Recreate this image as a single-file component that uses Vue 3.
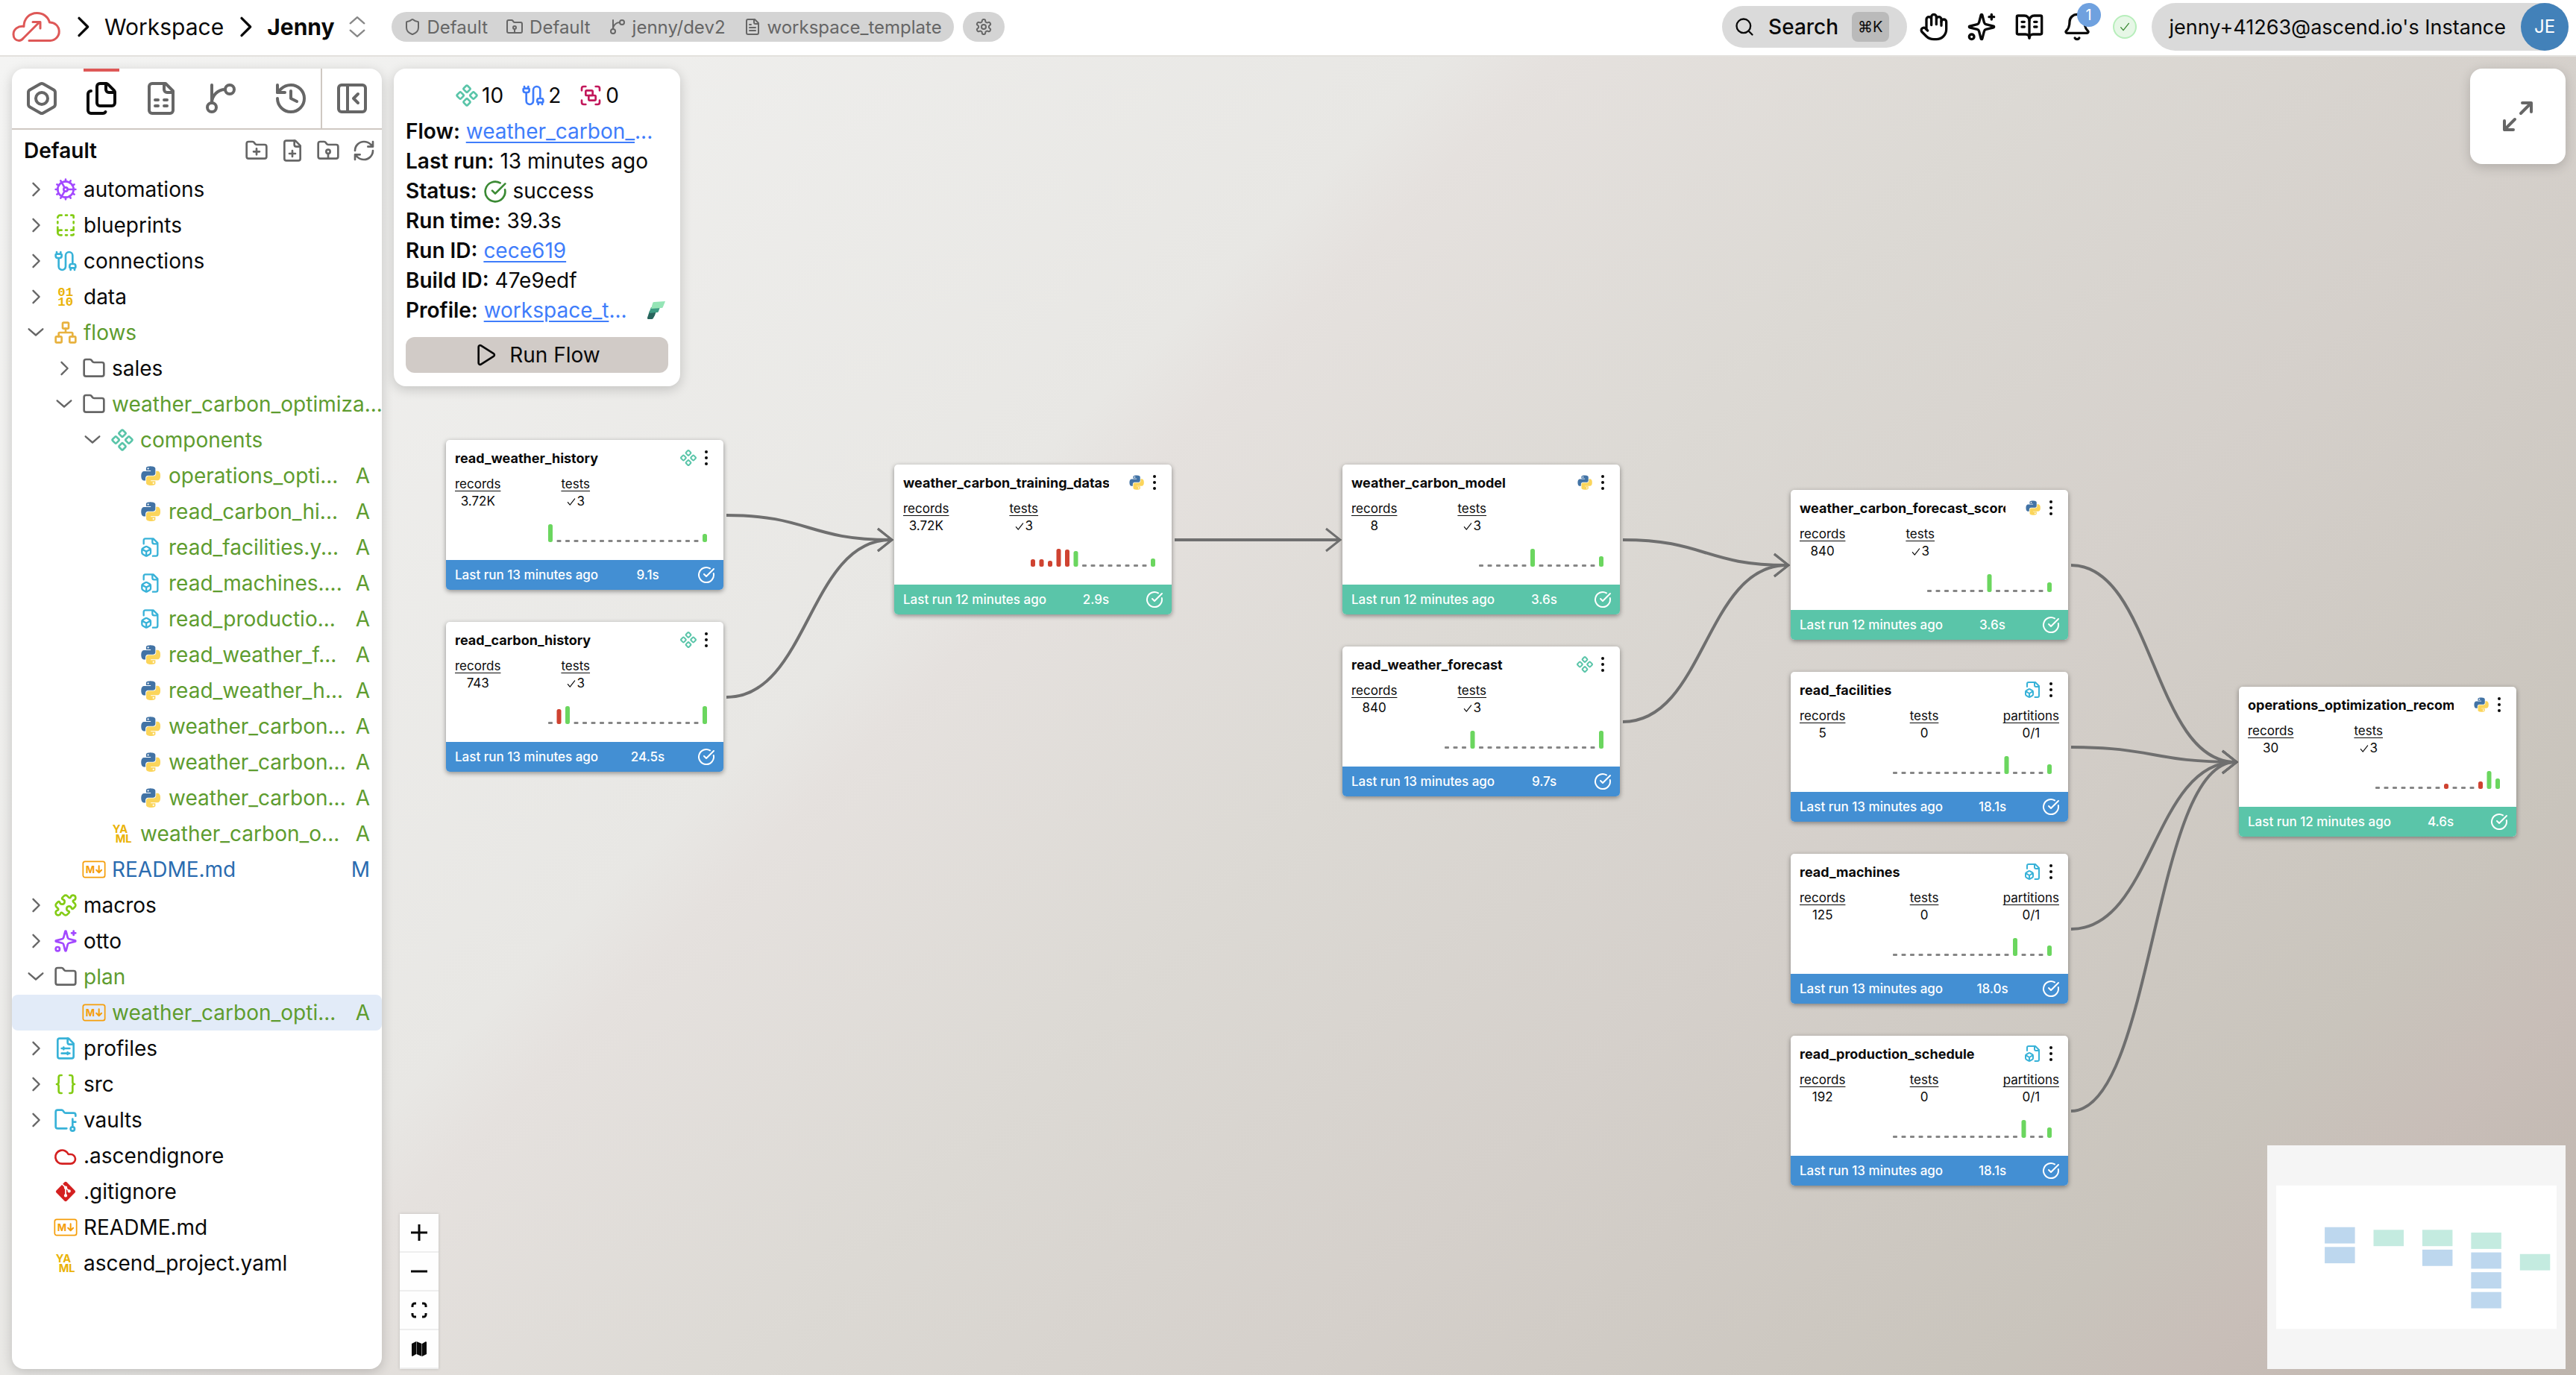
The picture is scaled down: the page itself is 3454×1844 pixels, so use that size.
<script setup>
import { ref, h } from 'vue'

const file = '<path d="M15 2H6a2 2 0 0 0-2 2v16a2 2 0 0 0 2 2h12a2 2 0 0 0 2-2V7Z"/><path d="M14 2v4a2 2 0 0 0 2 2h4"/>'
const folder = '<path d="M20 20a2 2 0 0 0 2-2V8a2 2 0 0 0-2-2h-7.9a2 2 0 0 1-1.69-.9L9.6 3.9A2 2 0 0 0 7.93 3H4a2 2 0 0 0-2 2v13a2 2 0 0 0 2 2Z"/>'

const icons = {
  folder,
  right: '<path d="m9 5 7 7-7 7"/>',
  down: '<path d="m4 8 8 7 8-7"/>',
  updown: '<path d="m4 8 8-7 8 7M4 16l8 7 8-7"/>',
  shield: '<path d="M20 13c0 5-3.5 7.5-7.66 8.95a1 1 0 0 1-.67-.01C7.5 20.5 4 18 4 13V6a1 1 0 0 1 1-1c2 0 4.5-1.2 6.24-2.72a1.17 1.17 0 0 1 1.52 0C14.51 3.81 17 5 19 5a1 1 0 0 1 1 1z"/>',
  project: folder + '<circle cx="12" cy="13" r="2"/><path d="M12 15v5"/>',
  branch: '<path d="M6 3v12M15 6a9 9 0 0 0-9 9"/><circle cx="18" cy="6" r="3"/><circle cx="6" cy="18" r="3"/>',
  fileText: file + '<path d="M10 9H8M16 13H8M16 17H8"/>',
  settings: '<path d="M12.22 2h-.44a2 2 0 0 0-2 2v.18a2 2 0 0 1-1 1.73l-.43.25a2 2 0 0 1-2 0l-.15-.08a2 2 0 0 0-2.73.73l-.22.38a2 2 0 0 0 .73 2.73l.15.1a2 2 0 0 1 1 1.72v.51a2 2 0 0 1-1 1.74l-.15.09a2 2 0 0 0-.73 2.73l.22.38a2 2 0 0 0 2.73.73l.15-.08a2 2 0 0 1 2 0l.43.25a2 2 0 0 1 1 1.73V20a2 2 0 0 0 2 2h.44a2 2 0 0 0 2-2v-.18a2 2 0 0 1 1-1.73l.43-.25a2 2 0 0 1 2 0l.15.08a2 2 0 0 0 2.73-.73l.22-.39a2 2 0 0 0-.73-2.73l-.15-.08a2 2 0 0 1-1-1.74v-.5a2 2 0 0 1 1-1.74l.15-.09a2 2 0 0 0 .73-2.73l-.22-.38a2 2 0 0 0-2.73-.73l-.15.08a2 2 0 0 1-2 0l-.43-.25a2 2 0 0 1-1-1.73V4a2 2 0 0 0-2-2z"/><circle cx="12" cy="12" r="3"/>',
  search: '<circle cx="11" cy="11" r="8"/><path d="m21 21-4.3-4.3"/>',
  hand: '<path d="M18 11V6a2 2 0 0 0-4 0M14 10V4a2 2 0 0 0-4 0v2M10 10.5V6a2 2 0 0 0-4 0v8"/><path d="M18 8a2 2 0 1 1 4 0v6a8 8 0 0 1-8 8h-2c-2.8 0-4.5-.86-5.99-2.34l-3.6-3.6a2 2 0 0 1 2.83-2.82L7 15"/>',
  sparkles: '<path d="M9.937 15.5A2 2 0 0 0 8.5 14.063l-6.135-1.582a.5.5 0 0 1 0-.962L8.5 9.936A2 2 0 0 0 9.937 8.5l1.582-6.135a.5.5 0 0 1 .963 0L14.063 8.5A2 2 0 0 0 15.5 9.937l6.135 1.581a.5.5 0 0 1 0 .964L15.5 14.063a2 2 0 0 0-1.437 1.437l-1.582 6.135a.5.5 0 0 1-.963 0z"/><path d="M20 2v4M22 4h-4"/><circle cx="4" cy="20" r="2"/>',
  book: '<path d="M12 7v14M16 12h2M16 8h2M6 12h2M6 8h2"/><path d="M3 18a1 1 0 0 1-1-1V4a1 1 0 0 1 1-1h5a4 4 0 0 1 4 4 4 4 0 0 1 4-4h5a1 1 0 0 1 1 1v13a1 1 0 0 1-1 1h-6a3 3 0 0 0-3 3 3 3 0 0 0-3-3z"/>',
  bell: '<path d="M10.268 21a2 2 0 0 0 3.464 0"/><path d="M3.262 15.326A1 1 0 0 0 4 17h16a1 1 0 0 0 .74-1.673C19.41 13.956 18 12.499 18 8A6 6 0 0 0 6 8c0 4.499-1.411 5.956-2.738 7.326"/>',
  check: '<path d="m4 13 5 6L20 5"/>',
  nut: '<path d="M21 16V8a2 2 0 0 0-1-1.73l-7-4a2 2 0 0 0-2 0l-7 4A2 2 0 0 0 3 8v8a2 2 0 0 0 1 1.73l7 4a2 2 0 0 0 2 0l7-4A2 2 0 0 0 21 16z"/><circle cx="12" cy="12" r="4"/>',
  files: '<path d="M15 2a2 2 0 0 1 1.414.586l4 4A2 2 0 0 1 21 8v7a2 2 0 0 1-2 2h-8a2 2 0 0 1-2-2V4a2 2 0 0 1 2-2z"/><path d="M15 2v4a2 2 0 0 0 2 2h4M5 7a2 2 0 0 0-2 2v11a2 2 0 0 0 2 2h8a2 2 0 0 0 1.732-1"/>',
  sheet: file + '<path d="M8 13h2M14 13h2M8 17h2M14 17h2"/>',
  history: '<path d="M3 12a9 9 0 1 0 9-9 9.75 9.75 0 0 0-6.74 2.74L3 8"/><path d="M3 3v5h5M12 7v5l4 2"/>',
  panel: '<rect x="3" y="3" width="18" height="18" rx="2"/><path d="M9 3v18M16 15l-3-3 3-3"/>',
  folderPlus: folder + '<path d="M12 10v6M9 13h6"/>',
  filePlus: file + '<path d="M9 15h6M12 18v-6"/>',
  refresh: '<path d="M3 12a9 9 0 0 1 9-9 9.75 9.75 0 0 1 6.74 2.74L21 8M21 3v5h-5M21 12a9 9 0 0 1-9 9 9.75 9.75 0 0 1-6.74-2.74L3 16M8 16H3v5"/>',
  cog: '<circle cx="12" cy="12" r="8"/><circle cx="12" cy="12" r="2"/><path d="M12 2v2M12 22v-2M17 20.66l-1-1.73M11 10.27 7 3.34M20.66 17l-1.73-1M3.34 7l1.73 1M14 12h8M2 12h2M20.66 7l-1.73 1M3.34 17l1.73-1M17 3.34l-1 1.73M11 13.73l-4 6.93"/>',
  blueprint: '<path d="M12 17h1.5M12 22h1.5M12 2h1.5M17.5 22H19a1 1 0 0 0 1-1M17.5 2H19a1 1 0 0 1 1 1v1.5M20 14v3h-2.5M20 8.5V10M4 10V8.5M4 19.5V14M4 4.5A2.5 2.5 0 0 1 6.5 2H8M8 22H6.5a1 1 0 0 1 0-5H8"/>',
  cable: '<path d="M17 21v-2a1 1 0 0 1-1-1v-1a2 2 0 0 1 2-2h2a2 2 0 0 1 2 2v1a1 1 0 0 1-1 1M19 15V6.5a1 1 0 0 0-7 0v11a1 1 0 0 1-7 0V9M21 21v-2h-4M3 5V3M4 9a2 2 0 0 1-2-2V6a1 1 0 0 1 1-1h4a1 1 0 0 1 1 1v1a2 2 0 0 1-2 2zM7 5V3"/>',
  binary: '<g stroke="none" fill="currentColor" font-family="Liberation Mono, monospace" font-weight="700" font-size="13"><text x="4" y="11">01</text><text x="4" y="21">10</text></g>',
  network: '<rect x="16" y="16" width="6" height="6" rx="1"/><rect x="2" y="16" width="6" height="6" rx="1"/><rect x="9" y="2" width="6" height="6" rx="1"/><path d="M5 16v-3a1 1 0 0 1 1-1h12a1 1 0 0 1 1 1v3M12 12V8"/>',
  component: '<path d="M15.536 11.293a1 1 0 0 0 0 1.414l2.376 2.377a1 1 0 0 0 1.414 0l2.377-2.377a1 1 0 0 0 0-1.414l-2.377-2.377a1 1 0 0 0-1.414 0zM2.297 11.293a1 1 0 0 0 0 1.414l2.377 2.377a1 1 0 0 0 1.414 0l2.377-2.377a1 1 0 0 0 0-1.414L6.088 8.916a1 1 0 0 0-1.414 0zM8.916 17.912a1 1 0 0 0 0 1.415l2.377 2.376a1 1 0 0 0 1.414 0l2.377-2.376a1 1 0 0 0 0-1.415l-2.377-2.376a1 1 0 0 0-1.414 0zM8.916 4.674a1 1 0 0 0 0 1.414l2.377 2.376a1 1 0 0 0 1.414 0l2.377-2.376a1 1 0 0 0 0-1.414l-2.377-2.377a1 1 0 0 0-1.414 0z"/>',
  group: '<path d="M3 7V5c0-1.1.9-2 2-2h2M17 3h2c1.1 0 2 .9 2 2v2M21 17v2c0 1.1-.9 2-2 2h-2M7 21H5c-1.1 0-2-.9-2-2v-2"/><rect x="7" y="7" width="7" height="5" rx="1"/><rect x="10" y="12" width="7" height="5" rx="1"/>',
  fileBox: '<path d="M14.5 22H18a2 2 0 0 0 2-2V7l-5-5H6a2 2 0 0 0-2 2v4M14 2v4a2 2 0 0 0 2 2h4M3 13.1a2 2 0 0 0-1 1.76v3.24a2 2 0 0 0 .97 1.78L6 21.7a2 2 0 0 0 2.03.01L11 19.9a2 2 0 0 0 1-1.76V14.9a2 2 0 0 0-.97-1.78L8 11.3a2 2 0 0 0-2.03-.01ZM7 17v5M11.7 14.2 7 17l-4.7-2.8"/>',
  python: '<g transform="translate(2.5 2.5) scale(.8)" stroke="none"><path fill="#4273a5" d="M14.25.18l.9.2.73.26.59.3.45.32.34.34.25.34.16.33.1.3.04.26.02.2-.01.13V8.5l-.05.63-.13.55-.21.46-.26.38-.3.31-.33.25-.35.19-.35.14-.33.1-.3.07-.26.04-.21.02H8.77l-.69.05-.59.14-.5.22-.41.27-.33.32-.27.35-.2.36-.15.37-.1.35-.07.32-.04.27-.02.21v3.06H3.17l-.21-.03-.28-.07-.32-.12-.35-.18-.36-.26-.36-.36-.35-.46-.32-.59-.28-.73-.21-.88-.14-1.05-.05-1.23.06-1.22.16-1.04.24-.87.32-.71.36-.57.4-.44.42-.33.42-.24.4-.16.36-.1.32-.05.24-.01h.16l.06.01h8.16v-.83H6.18l-.01-2.75-.02-.37.05-.34.11-.31.17-.28.25-.26.31-.23.38-.2.44-.18.51-.15.58-.12.64-.1.71-.06.77-.04.84-.02 1.27.05zm-6.3 1.98l-.23.33-.08.41.08.41.23.34.33.22.41.09.41-.09.33-.22.23-.34.08-.41-.08-.41-.23-.33-.33-.22-.41-.09-.41.09z"/><path fill="#fbd55b" d="m21.1 6.11l.28.06.32.12.35.18.36.27.36.35.35.47.32.59.28.73.21.88.14 1.04.05 1.23-.06 1.23-.16 1.04-.24.86-.32.71-.36.57-.4.45-.42.33-.42.24-.4.16-.36.09-.32.05-.24.02-.16-.01h-8.22v.82h5.84l.01 2.76.02.36-.05.34-.11.31-.17.29-.25.25-.31.24-.38.2-.44.17-.51.15-.58.13-.64.09-.71.07-.77.04-.84.01-1.27-.04-1.07-.14-.9-.2-.73-.25-.59-.3-.45-.33-.34-.34-.25-.34-.16-.33-.1-.3-.04-.25-.02-.2.01-.13v-5.34l.05-.64.13-.54.21-.46.26-.38.3-.32.33-.24.35-.2.35-.14.33-.1.3-.06.26-.04.21-.02.13-.01h5.84l.69-.05.59-.14.5-.21.41-.28.33-.32.27-.35.2-.36.15-.36.1-.35.07-.32.04-.28.02-.21V6.07h2.09l.14.01zm-6.47 14.25l-.23.33-.08.41.08.41.23.33.33.23.41.08.41-.08.33-.23.23-.33.08-.41-.08-.41-.23-.33-.33-.23-.41-.08-.41.08z"/></g>',
  yaml: '<g stroke="none" fill="currentColor" font-family="Inter, sans-serif" font-weight="700" font-size="11"><text x="2" y="11">YA</text><text x="5" y="21">ML</text></g>',
  markdown: '<rect x="1" y="4" width="22" height="16" rx="2" stroke-width="1.3"/><text x="3.6" y="15.4" stroke="none" fill="currentColor" font-family="Inter, sans-serif" font-weight="700" font-size="10">M</text><path d="M17 8.5v6.5M14.4 12.6 17 15.2l2.6-2.6" stroke-width="1.5"/>',
  puzzle: '<path d="M15.39 4.39a1 1 0 0 0 1.68-.474 2.5 2.5 0 1 1 3.014 3.015 1 1 0 0 0-.474 1.68l1.683 1.682a2.414 2.414 0 0 1 0 3.414L19.61 15.39a1 1 0 0 1-1.68-.474 2.5 2.5 0 1 0-3.014 3.015 1 1 0 0 1 .474 1.68l-1.683 1.682a2.414 2.414 0 0 1-3.414 0L8.61 19.61a1 1 0 0 0-1.68.474 2.5 2.5 0 1 1-3.014-3.015 1 1 0 0 0 .474-1.68l-1.683-1.682a2.414 2.414 0 0 1 0-3.414L4.39 8.61a1 1 0 0 1 1.68.474 2.5 2.5 0 1 0 3.014-3.015 1 1 0 0 1-.474-1.68l1.683-1.682a2.414 2.414 0 0 1 3.414 0z"/>',
  fileSliders: file + '<path d="M8 12h8M10 11v2M8 17h8M14 16v2"/>',
  braces: '<path d="M8 3H7a2 2 0 0 0-2 2v5a2 2 0 0 1-2 2 2 2 0 0 1 2 2v5c0 1.1.9 2 2 2h1M16 21h1a2 2 0 0 0 2-2v-5c0-1.1.9-2 2-2a2 2 0 0 1-2-2V5a2 2 0 0 0-2-2h-1"/>',
  vault: '<path d="M13 20.5H4a2 2 0 0 1-2-2V4a2 2 0 0 1 2-2h3.9a2 2 0 0 1 1.69.9l.81 1.2a2 2 0 0 0 1.67.9H20a2 2 0 0 1 2 2v1M19 18v-7M19 14h3"/><circle cx="19" cy="21" r="2"/>',
  cloud: '<path d="M8.5 20a6.8 6.8 0 1 1 6.3-9.5H17a4.75 4.75 0 0 1 0 9.5z"/>',
  git: '<path stroke="none" fill="currentColor" d="M10.8 2.7a1.7 1.7 0 0 1 2.4 0l8.1 8.1a1.7 1.7 0 0 1 0 2.4l-8.1 8.1a1.7 1.7 0 0 1-2.4 0l-8.1-8.1a1.7 1.7 0 0 1 0-2.4z"/><g stroke="#fff" stroke-width="1.3"><path d="M8.5 4.5l3.5 3.5v8M12 8l3.5 3.5"/><g fill="#fff"><circle cx="12" cy="8" r="1"/><circle cx="12" cy="16" r="1"/><circle cx="15.5" cy="11.5" r="1"/></g></g>',
  done: '<path d="M21.801 10A10 10 0 1 1 17 3.335M9 11l3 3L22 4"/>',
  play: '<path d="M5 4a1.6 1.6 0 0 1 2.4-1.4l12.7 8a1.6 1.6 0 0 1 0 2.8l-12.7 8A1.6 1.6 0 0 1 5 20z"/>',
  expand: '<path d="M15 3h6v6M9 21H3v-6M21 3l-7 7M3 21l7-7"/>',
  plus: '<path d="M12 1v22M1 12h22"/>',
  minus: '<path d="M1 12h22"/>',
  fit: '<path d="M3 8V6a3 3 0 0 1 3-3h2M16 3h2a3 3 0 0 1 3 3v2M21 16v2a3 3 0 0 1-3 3h-2M8 21H6a3 3 0 0 1-3-3v-2"/>',
  map: '<g fill="currentColor" stroke="none"><path d="M2 5l6-3v17l-4.600 2.700A1 1 0 0 1 2 21z"/><path d="M8.500 2l7 3v17l-7-3z"/><path d="M16 5l4.600-2.700A1 1 0 0 1 22 3v16l-6 3z"/></g>',
  dots: '<g fill="currentColor" stroke="none"><circle cx="12" cy="4" r="2"/><circle cx="12" cy="12" r="2"/><circle cx="12" cy="20" r="2"/></g>',
}

const Icon = (props) => h('svg', {
  class: 'icon',
  viewBox: '0 0 24 24',
  'aria-hidden': 'true',
  innerHTML: icons[props.name],
})
Icon.props = ['name']

const activeTab = ref('files')
const tabs = [
  { id: 'nut', label: 'Build' },
  { id: 'files', label: 'Files' },
  { id: 'sheet', label: 'Summary' },
  { id: 'branch', label: 'Source control' },
]

const chips = [
  { icon: 'shield', text: 'Default' },
  { icon: 'project', text: 'Default' },
  { icon: 'branch', text: 'jenny/dev2' },
  { icon: 'fileText', text: 'workspace_template' },
]

const selected = ref(23)
const tree = [
  { name: 'automations', icon: 'cog', tint: 'purple', open: false },
  { name: 'blueprints', icon: 'blueprint', tint: 'lime', open: false },
  { name: 'connections', icon: 'cable', tint: 'sky', open: false },
  { name: 'data', icon: 'binary', tint: 'gold', open: false },
  { name: 'flows', icon: 'network', tint: 'amber', open: true, state: 'added' },
  { name: 'sales', icon: 'folder', level: 1, open: false },
  { name: 'weather_carbon_optimiza...', icon: 'folder', level: 1, open: true, state: 'added' },
  { name: 'components', icon: 'component', tint: 'teal', level: 2, open: true, state: 'added' },
  { name: 'operations_opti...', icon: 'python', level: 3, state: 'added', mark: 'A' },
  { name: 'read_carbon_hi...', icon: 'python', level: 3, state: 'added', mark: 'A' },
  { name: 'read_facilities.y...', icon: 'fileBox', tint: 'sky', level: 3, state: 'added', mark: 'A' },
  { name: 'read_machines....', icon: 'fileBox', tint: 'sky', level: 3, state: 'added', mark: 'A' },
  { name: 'read_productio...', icon: 'fileBox', tint: 'sky', level: 3, state: 'added', mark: 'A' },
  { name: 'read_weather_f...', icon: 'python', level: 3, state: 'added', mark: 'A' },
  { name: 'read_weather_h...', icon: 'python', level: 3, state: 'added', mark: 'A' },
  { name: 'weather_carbon...', icon: 'python', level: 3, state: 'added', mark: 'A' },
  { name: 'weather_carbon...', icon: 'python', level: 3, state: 'added', mark: 'A' },
  { name: 'weather_carbon...', icon: 'python', level: 3, state: 'added', mark: 'A' },
  { name: 'weather_carbon_o...', icon: 'yaml', tint: 'gold', level: 2, state: 'added', mark: 'A' },
  { name: 'README.md', icon: 'markdown', tint: 'orange', level: 1, state: 'modified', mark: 'M' },
  { name: 'macros', icon: 'puzzle', tint: 'lime', open: false },
  { name: 'otto', icon: 'sparkles', tint: 'purple', open: false },
  { name: 'plan', icon: 'folder', open: true, state: 'added' },
  { name: 'weather_carbon_opti...', icon: 'markdown', tint: 'orange', level: 1, state: 'added', mark: 'A' },
  { name: 'profiles', icon: 'fileSliders', tint: 'sky', open: false },
  { name: 'src', icon: 'braces', tint: 'lime', open: false },
  { name: 'vaults', icon: 'vault', tint: 'sky', open: false },
  { name: '.ascendignore', icon: 'cloud', tint: 'red' },
  { name: '.gitignore', icon: 'git', tint: 'red' },
  { name: 'README.md', icon: 'markdown', tint: 'orange' },
  { name: 'ascend_project.yaml', icon: 'yaml', tint: 'gold' },
]

// bars: total slots, then [slot, height, failed]
const nodes = [
  { name: 'read_weather_history', x: 598, y: 514, icon: 'component', records: '3.72K', tests: 3, ago: 13, time: '9.1s', slots: 19, bars: [[0, 24], [18, 11]] },
  { name: 'read_carbon_history', x: 598, y: 758, icon: 'component', records: '743', tests: 3, ago: 13, time: '24.5s', slots: 19, bars: [[1, 20, true], [2, 24], [18, 24]] },
  { name: 'weather_carbon_training_datas', x: 1199, y: 547, icon: 'python', records: '3.72K', tests: 3, ago: 12, time: '2.9s', slots: 15, bars: [[0, 10, true], [1, 10, true], [2, 8, true], [3, 24, true], [4, 23, true], [5, 21], [14, 11]] },
  { name: 'weather_carbon_model', x: 1800, y: 547, icon: 'python', records: '8', tests: 3, ago: 12, time: '3.6s', slots: 15, bars: [[6, 24], [14, 14]] },
  { name: 'read_weather_forecast', x: 1800, y: 791, icon: 'component', records: '840', tests: 3, ago: 13, time: '9.7s', slots: 19, bars: [[3, 24], [18, 24]] },
  { name: 'weather_carbon_forecast_score', x: 2401, y: 581, icon: 'python', records: '840', tests: 3, ago: 12, time: '3.6s', slots: 15, bars: [[7, 24], [14, 13]] },
  { name: 'read_facilities', x: 2401, y: 825, icon: 'fileBox', records: '5', tests: 0, partitions: '0/1', ago: 13, time: '18.1s', slots: 19, bars: [[13, 24], [18, 13]] },
  { name: 'read_machines', x: 2401, y: 1069, icon: 'fileBox', records: '125', tests: 0, partitions: '0/1', ago: 13, time: '18.0s', slots: 19, bars: [[14, 24], [18, 14]] },
  { name: 'read_production_schedule', x: 2401, y: 1313, icon: 'fileBox', records: '192', tests: 0, partitions: '0/1', ago: 13, time: '18.1s', slots: 19, bars: [[15, 24], [18, 14]] },
  { name: 'operations_optimization_recom', x: 3002, y: 845, icon: 'python', records: '30', tests: 3, ago: 12, time: '4.6s', slots: 15, bars: [[8, 7, true], [12, 10, true], [13, 24], [14, 14]] },
]

const links = [[0, 2], [1, 2], [2, 3], [3, 5], [4, 5], [5, 9], [6, 9], [7, 9], [8, 9]]

const edgePath = ([from, to]) => {
  const x1 = nodes[from].x + 376
  const y1 = nodes[from].y + 101
  const x2 = nodes[to].x - 5
  const y2 = nodes[to].y + 101
  const mid = (x1 + x2) / 2
  return `M${x1} ${y1}C${mid} ${y1} ${mid} ${y2} ${x2} ${y2}`
}

// every run is a slot in the chart; a slot without a run gets a short dash
const history = (node) => Array.from({ length: node.slots }, (_, i) => {
  const bar = node.bars.find((b) => b[0] === i)
  return bar
    ? { x: i * 23, height: bar[1] * 2, kind: bar[2] ? 'failed' : 'passed' }
    : { x: i * 23, height: 6, kind: 'none' }
})

const isTransform = (node) => node.ago === 12
</script>

<template>
  <div class="page">
    <header class="topbar">
      <nav class="crumbs" aria-label="Breadcrumb">
        <a href="#" class="logo" aria-label="Ascend">
          <svg viewBox="0 0 66 40">
            <path d="M23 38.5h28.500a12.2 12.2 0 0 0-1-24.5C48.5 6.5 42 1.5 33.5 1.5 23.5 1.5 16 9 16 19.5 8 18.5 2 23.5 2 30c0 5 3 8.5 7.5 8.5 3 0 4.5-1.5 6-3.500L37 13.5M28 13.5h10V22" />
          </svg>
        </a>
        <Icon name="right" class="crumb-sep" />
        <a href="#" class="crumb">Workspace</a>
        <Icon name="right" class="crumb-sep" />
        <button class="crumb current">Jenny<Icon name="updown" class="updown" /></button>
      </nav>
      <div class="chips">
        <span v-for="(chip, i) in chips" :key="i" class="chip"><Icon :name="chip.icon" />{{ chip.text }}</span>
      </div>
      <button class="gear" aria-label="Workspace settings"><Icon name="settings" /></button>

      <div class="tools">
        <button class="search"><Icon name="search" /><span>Search</span><kbd>⌘K</kbd></button>
        <div class="actions">
          <button aria-label="Raise hand"><Icon name="hand" /></button>
          <button aria-label="Otto"><Icon name="sparkles" /></button>
          <button aria-label="Docs"><Icon name="book" /></button>
          <button class="bell" aria-label="Notifications"><Icon name="bell" /><span class="count">1</span></button>
        </div>
        <span class="healthy"><Icon name="check" /></span>
        <button class="instance"><span>jenny+41263@ascend.io's Instance</span><span class="avatar">JE</span></button>
      </div>
    </header>

    <main class="canvas">
      <div class="flow">
        <svg class="edges">
          <defs>
            <marker id="arrow" viewBox="0 0 24 36" markerWidth="24" markerHeight="36" refX="20" refY="18" orient="auto" markerUnits="userSpaceOnUse">
              <path d="M3 3l19 15L3 33" />
            </marker>
          </defs>
          <path v-for="(link, i) in links" :key="i" :d="edgePath(link)" marker-end="url(#arrow)" />
        </svg>

        <article v-for="node in nodes" :key="node.name" class="node" :style="{ left: node.x + 'px', top: node.y + 'px' }">
          <div class="node-head">
            <h3>{{ node.name }}</h3>
            <Icon :name="node.icon" :class="node.icon" />
            <button aria-label="Node menu"><Icon name="dots" /></button>
          </div>
          <dl class="stats">
            <div><dt>records</dt><dd>{{ node.records }}</dd></div>
            <div><dt>tests</dt><dd><Icon v-if="node.tests" name="check" />{{ node.tests }}</dd></div>
            <div v-if="node.partitions"><dt>partitions</dt><dd>{{ node.partitions }}</dd></div>
            <div v-else class="no-stat"></div>
          </dl>
          <svg class="runs" :viewBox="`0 0 ${node.slots * 23 - 11} 48`">
            <rect v-for="(bar, i) in history(node)" :key="i" :class="bar.kind" :x="bar.x" :y="48 - bar.height" width="12" :height="bar.height" :rx="bar.kind === 'none' ? 2 : 5" />
          </svg>
          <footer :class="{ transform: isTransform(node) }">
            <span>Last run {{ node.ago }} minutes ago</span>
            <span>{{ node.time }}</span>
            <Icon name="done" />
          </footer>
        </article>
      </div>

      <aside class="sidebar">
        <div class="tabs">
          <div class="tab-list">
            <button v-for="tab in tabs" :key="tab.id" :aria-label="tab.label" :class="{ active: activeTab === tab.id }" @click="activeTab = tab.id">
              <Icon :name="tab.id" />
            </button>
          </div>
          <button aria-label="History" class="history" :class="{ active: activeTab === 'history' }" @click="activeTab = 'history'"><Icon name="history" /></button>
          <button aria-label="Collapse sidebar" class="collapse"><Icon name="panel" /></button>
        </div>
        <div class="files-head">
          <h2>Default</h2>
          <button aria-label="New folder"><Icon name="folderPlus" /></button>
          <button aria-label="New file"><Icon name="filePlus" /></button>
          <button aria-label="Project folder"><Icon name="project" /></button>
          <button aria-label="Refresh"><Icon name="refresh" /></button>
        </div>
        <ul class="tree">
          <li v-for="(row, i) in tree" :key="i">
            <button :class="['row', 'level-' + (row.level || 0), row.state, { selected: selected === i }]" @click="selected = i">
              <span class="toggle"><Icon v-if="row.open !== undefined" :name="row.open ? 'down' : 'right'" /></span>
              <Icon :name="row.icon" :class="['kind', row.tint, row.icon]" />
              <span class="name">{{ row.name }}</span>
              <span v-if="row.mark" class="mark">{{ row.mark }}</span>
            </button>
          </li>
        </ul>
      </aside>

      <div class="overlay">
        <div class="overlay-row">
          <section class="summary">
            <div class="counts">
              <span><Icon name="component" class="teal" />10</span>
              <span><Icon name="cable" class="blue" />2</span>
              <span><Icon name="group" class="pink" />0</span>
            </div>
            <p><b>Flow:</b> <a href="#">weather_carbon_</a><i>...</i></p>
            <p><b>Last run:</b> 13 minutes ago</p>
            <p><b>Status:</b> <Icon name="done" class="ok" /> success</p>
            <p><b>Run time:</b> 39.3s</p>
            <p><b>Run ID:</b> <a href="#">cece619</a></p>
            <p><b>Build ID:</b> 47e9edf</p>
            <p class="profile">
              <span><b>Profile:</b> <a href="#">workspace_t</a><i>...</i></span>
              <svg class="fabric" viewBox="0 0 24 24">
                <path fill="#27645c" d="M3 13h9l-2 6-2 3.500a2 2 0 0 1-2 1.500H1.500A1.500 1.500 0 0 1 0 22z" />
                <path fill="#3d9c83" d="M5 8h12l-2 5.500a2 2 0 0 1-2 1.500L2 16z" />
                <path fill="#95e5b6" d="M7 3a2 2 0 0 1 2-2l15-1-3 7.500A2 2 0 0 1 19 9L5 10z" />
              </svg>
            </p>
            <button class="run"><Icon name="play" />Run Flow</button>
          </section>
          <button class="expand" aria-label="Expand"><Icon name="expand" /></button>
        </div>

        <div class="overlay-row bottom">
          <div class="zoom">
            <button aria-label="Zoom in"><Icon name="plus" /></button>
            <button aria-label="Zoom out"><Icon name="minus" /></button>
            <button aria-label="Fit view"><Icon name="fit" /></button>
            <button aria-label="Toggle map"><Icon name="map" /></button>
          </div>
          <svg class="minimap" viewBox="-110 -494 3674 2756">
            <rect class="view" width="3454" height="1768" />
            <rect v-for="node in nodes" :key="node.name" :class="{ transform: isTransform(node) }" :x="node.x" :y="node.y" width="372" height="201" />
          </svg>
        </div>
      </div>
    </main>
  </div>
</template>

<style>
body {
  margin: 0;
}
</style>

<style scoped>
.page {
  --teal: #5ac5a9;
  --blue: #438fd3;
  --green: #5e9c2f;
  display: flex;
  flex-direction: column;
  min-height: 100vh;
  font-family: Inter, 'Liberation Sans', sans-serif;
  font-size: 28px;
  color: #0a0a0a;
}

* {
  box-sizing: border-box;
}

button {
  font: inherit;
  color: inherit;
  border: none;
  background: none;
  padding: 0;
  cursor: pointer;
}

a {
  color: inherit;
  text-decoration: none;
}

h2, h3, p, dl, dd, ul {
  margin: 0;
  padding: 0;
  font-size: inherit;
}

.icon {
  display: block;
  flex: none;
  width: 32px;
  height: 32px;
  overflow: visible;
  fill: none;
  stroke: currentColor;
  stroke-width: 2;
  stroke-linecap: round;
  stroke-linejoin: round;
}

/* top bar */
.topbar {
  display: flex;
  align-items: center;
  height: 76px;
  padding: 0 10px 2px 16px;
  border-bottom: 2px solid #e3e1dd;
  background: #fff;
}

.crumbs {
  display: flex;
  align-items: center;
  font-size: 30px;
}

.logo svg {
  display: block;
  width: 66px;
  height: 40px;
  fill: none;
  stroke: #de5857;
  stroke-width: 3;
  stroke-linecap: round;
  stroke-linejoin: round;
}

.crumb-sep {
  width: 40px;
  height: 40px;
  margin: 0 9px;
}

.current {
  display: flex;
  align-items: center;
  gap: 16px;
  font-weight: 700;
}

.updown {
  width: 28px;
  height: 28px;
  color: #888;
}

.chips {
  display: flex;
  align-items: center;
  gap: 24px;
  height: 40px;
  margin: 0 12px 0 32px;
  padding: 0 16px;
  border-radius: 20px;
  background: #d4d4d4;
  color: #666;
  font-size: 24px;
}

.chip {
  display: flex;
  align-items: center;
  gap: 8px;
}

.chip .icon,
.gear .icon {
  width: 24px;
  height: 24px;
}

.gear {
  display: grid;
  place-items: center;
  width: 56px;
  height: 40px;
  border-radius: 20px;
  background: #d4d4d4;
  color: #666;
}

.tools {
  display: flex;
  align-items: center;
  margin-left: auto;
}

.search {
  display: flex;
  align-items: center;
  height: 56px;
  margin-right: 16px;
  padding: 0 24px 0 16px;
  border-radius: 28px;
  background: #dadada;
  font-weight: 500;
}

.search .icon {
  width: 28px;
  height: 28px;
}

.search span {
  margin: 0 18px;
}

kbd {
  height: 40px;
  padding: 0 8px;
  border-radius: 8px;
  background: #bababa;
  font: 400 20px/40px Inter, 'DejaVu Sans', sans-serif;
}

.actions {
  display: flex;
  gap: 24px;
  margin-right: 28px;
}

.actions .icon {
  width: 40px;
  height: 40px;
}

.bell {
  position: relative;
}

.count {
  position: absolute;
  top: -12px;
  right: -12px;
  width: 32px;
  height: 32px;
  border-radius: 50%;
  background: #6fa1df;
  color: #fff;
  font-size: 20px;
  line-height: 32px;
}

.healthy {
  display: grid;
  place-items: center;
  width: 32px;
  height: 32px;
  margin-right: 20px;
  border: 2px solid #b7eebb;
  border-radius: 50%;
  background: #e6f7e6;
  color: #3b8a34;
}

.healthy .icon {
  width: 16px;
  height: 16px;
}

.instance {
  display: flex;
  align-items: center;
  gap: 20px;
  height: 64px;
  padding-left: 24px;
  border-radius: 32px;
  background: #dadada;
  font-size: 27px;
}

.avatar {
  width: 64px;
  height: 64px;
  border-radius: 50%;
  background: #4281b9;
  color: #fff;
  font-size: 24px;
  line-height: 64px;
}

/* canvas */
.canvas {
  position: relative;
  flex: 1;
  display: flex;
  gap: 16px;
  padding: 16px 14px 8px 16px;
  overflow: hidden;
  background: linear-gradient(135deg, #f4f4f3 0%, #e8e7e4 37%, #e5e1de 40%, #dcd9d4 53%, #d5d0cb 67%, #c9c4bc 85%, #c8beb8 90%, #bdb4ac 100%);
}

.flow {
  position: absolute;
  inset: 0;
}

.edges {
  position: absolute;
  width: 100%;
  height: 100%;
  fill: none;
  stroke: #6f6f6f;
  stroke-width: 4;
}

.edges marker path {
  stroke-width: 3;
}

.node {
  position: absolute;
  display: flex;
  flex-direction: column;
  width: 372px;
  border-radius: 5px;
  background: #fff;
  box-shadow: 0 2px 6px rgba(0, 0, 0, 0.4);
  font-size: 17px;
  line-height: 23px;
}

.node-head {
  display: flex;
  align-items: center;
  height: 48px;
  padding: 0 11px 0 12px;
}

.node-head h3 {
  width: 276px;
  margin-right: auto;
  overflow: hidden;
  white-space: nowrap;
  font-size: 18px;
  font-weight: 700;
}

.node-head .icon {
  width: 24px;
  height: 24px;
}

.stats {
  display: flex;
  justify-content: space-between;
  padding: 0 12px;
  text-align: center;
}

.stats dt {
  text-decoration: underline;
  text-underline-offset: 3px;
}

.stats dd {
  display: flex;
  align-items: center;
  justify-content: center;
}

.stats .icon {
  width: 14px;
  height: 14px;
}

.no-stat {
  width: 86px;
}

.runs {
  align-self: flex-end;
  height: 24px;
  margin: 19px 22px 24px 0;
}

.runs .passed { fill: #6bd65f; }
.runs .failed { fill: #cf4331; }
.runs .none { fill: #868686; }

.node footer {
  display: flex;
  align-items: center;
  justify-content: space-between;
  height: 40px;
  padding: 0 11px 0 12px;
  border-radius: 0 0 5px 5px;
  background: var(--blue);
  color: #fff;
  font-weight: 500;
}

.node footer.transform {
  background: var(--teal);
}

.node footer .icon {
  width: 24px;
  height: 24px;
}

/* sidebar */
.sidebar {
  position: relative;
  flex: none;
  width: 496px;
  border-radius: 16px;
  background: #fff;
  box-shadow: 0 4px 16px rgba(0, 0, 0, 0.18);
}

.tabs {
  display: flex;
  height: 82px;
  border-bottom: 2px solid #cfc8c2;
  color: #666;
}

.tabs .icon {
  width: 48px;
  height: 48px;
}

.tab-list {
  display: flex;
  gap: 32px;
  flex: 1;
  padding-left: 16px;
}

.tab-list .active {
  color: #0a0a0a;
  box-shadow: inset 0 4px 0 #de5857;
}

.history {
  padding: 0 16px;
}

.collapse {
  padding: 0 16px;
  border-left: 2px solid #cfc8c2;
}

.files-head {
  display: flex;
  align-items: center;
  gap: 16px;
  height: 56px;
  padding: 0 8px 0 16px;
}

.files-head h2 {
  margin-right: auto;
  font-weight: 600;
}

.files-head button {
  color: #666;
}

.tree {
  list-style: none;
}

.row {
  display: flex;
  align-items: center;
  width: 100%;
  height: 48px;
  padding: 0 16px;
  border-radius: 8px;
  text-align: left;
  white-space: nowrap;
}

.level-1 { padding-left: 54px; }
.level-2 { padding-left: 92px; }
.level-3 { padding-left: 130px; }

.added { color: var(--green); }
.modified { color: #2b6cb0; }
.selected { background: #e2ebf8; }

.toggle {
  flex: none;
  width: 32px;
  margin-right: 8px;
  color: #666;
}

.toggle .icon {
  width: 28px;
  height: 28px;
  margin-left: 2px;
}

.kind {
  margin-right: 8px;
}

.kind.folder {
  color: #666;
}

.kind.fileBox {
  width: 28px;
  height: 28px;
  margin: 0 10px 0 2px;
}

.name {
  flex: none;
}

.mark {
  margin-left: auto;
}

.purple { color: #a349ff; }
.lime { color: #84cc16; }
.sky, .fileBox { color: #38b2d8; }
.gold { color: #eab308; }
.amber { color: #e8b23f; }
.orange { color: #f59e0b; }
.teal, .component { color: var(--teal); }
.blue { color: #3f7dfb; }
.pink { color: #c2185b; }
.red { color: #d42020; }

/* panels over the canvas */
.overlay {
  position: relative;
  flex: 1;
  display: flex;
  flex-direction: column;
  justify-content: space-between;
}

.overlay-row {
  display: flex;
  align-items: flex-start;
  justify-content: space-between;
}

.bottom {
  align-items: flex-end;
  padding-left: 8px;
}

.summary {
  width: 384px;
  padding: 16px 16px 18px;
  border-radius: 16px;
  background: #fff;
  box-shadow: 0 4px 16px rgba(0, 0, 0, 0.18);
  line-height: 40px;
}

.summary b {
  font-weight: 600;
}

.summary i {
  color: #3f7dfb;
  font-style: normal;
}

.summary a {
  color: #3f7dfb;
  text-decoration: underline;
  text-decoration-thickness: 2px;
  text-underline-offset: 4px;
}

.summary .ok {
  display: inline-block;
  margin-bottom: 2px;
  vertical-align: middle;
  color: #3b8a34;
}

.counts {
  display: flex;
  justify-content: center;
  gap: 24px;
  margin-bottom: 8px;
}

.counts span {
  display: flex;
  align-items: center;
  gap: 4px;
}

.profile {
  display: flex;
  align-items: center;
  justify-content: space-between;
  padding-right: 4px;
}

.fabric {
  width: 24px;
  height: 24px;
}

.run {
  display: flex;
  align-items: center;
  justify-content: center;
  gap: 16px;
  width: 100%;
  height: 48px;
  margin-top: 16px;
  border-radius: 12px;
  background: #d1cbc7;
}

.expand {
  display: grid;
  place-items: center;
  width: 128px;
  height: 128px;
  border-radius: 16px;
  background: #fff;
  box-shadow: 0 4px 16px rgba(0, 0, 0, 0.18);
  color: #666;
}

.expand .icon {
  width: 48px;
  height: 48px;
}

.zoom {
  display: flex;
  flex-direction: column;
  box-shadow: 0 0 4px rgba(0, 0, 0, 0.16);
}

.zoom button {
  display: grid;
  place-items: center;
  width: 52px;
  height: 52px;
  border-bottom: 2px solid #eee;
  background: #fefefe;
}

.zoom .icon {
  width: 24px;
  height: 24px;
  stroke-width: 3;
  stroke-linecap: butt;
}

.minimap {
  width: 400px;
  height: 300px;
  background: #f5f5f5;
  fill: #bdd7ee;
}

.minimap .transform { fill: #c4ebe0; }
.minimap .view { fill: #fff; }
</style>
